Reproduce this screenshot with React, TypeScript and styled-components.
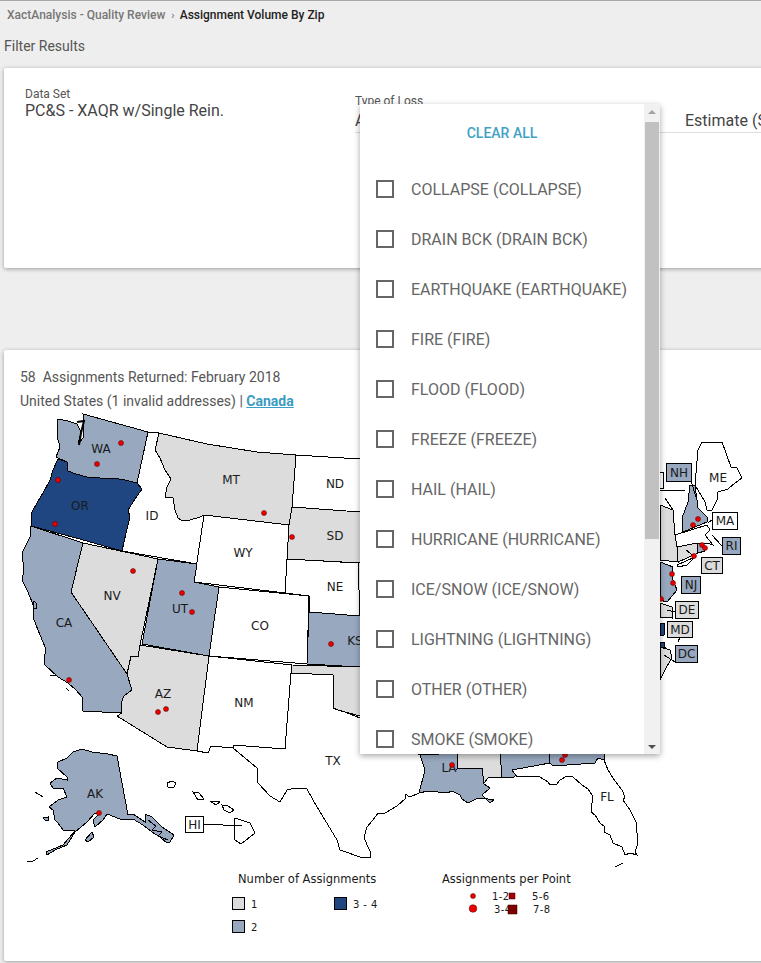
import styled, { createGlobalStyle } from "styled-components";

const GlobalStyle = createGlobalStyle`
  html, body {
    margin: 0;
    padding: 0;
    background: #eeeeee;
    overflow: hidden;
    font-family: Roboto, "Liberation Sans", sans-serif;
  }
`;

const GRAY = "#dcdcdc";
const SLATE = "#97a8bf";
const NAVY = "#1f4680";
const WHITE = "#ffffff";

const Page = styled.div`
  position: relative;
  width: 761px;
  height: 963px;
  overflow: hidden;
  border-top: 1px solid #a8a8a8;
  box-sizing: border-box;
`;

const Breadcrumb = styled.div`
  display: flex;
  align-items: center;
  height: 28px;
  padding-left: 7px;
  font-size: 12px;
  font-weight: 500;
  color: #222;
`;

const Crumb = styled.span`
  color: #777;
`;

const CrumbArrow = styled.span`
  margin: 0 5px 0 6px;
  font-size: 11px;
  color: #777;
`;

const Title = styled.div`
  padding: 8px 0 0 4px;
  height: 31px;
  font-size: 14px;
  line-height: 18px;
  color: #555;
`;

const Card = styled.section<{ $height: number }>`
  width: 830px;
  margin-left: 4px;
  height: ${(p) => p.$height}px;
  background: #fff;
  border-radius: 2px;
  box-shadow: 0 1px 4px rgba(0, 0, 0, 0.35);
`;

const FilterRow = styled.div`
  display: grid;
  grid-template-columns: 330px 330px 140px;
  padding-left: 21px;
`;

const Field = styled.div<{ $top: number }>`
  padding-top: ${(p) => p.$top}px;
  white-space: nowrap;
  overflow: hidden;
`;

const FieldLabel = styled.div`
  font-size: 12px;
  line-height: 14px;
  color: #555;
`;

const FieldValue = styled.div<{ $line?: boolean }>`
  box-sizing: border-box;
  font-size: 16px;
  line-height: 19px;
  color: #444;
  ${(p) =>
    p.$line &&
    `
    height: 25px;
    padding-top: 3px;
    border-bottom: 1px solid #dddddd;
  `}
`;

const MapCard = styled(Card)`
  margin-top: 82px;
`;

const Summary = styled.div`
  padding: 15px 0 0 16px;
  height: 45px;
  font-size: 14px;
  line-height: 24px;
  color: #555;
`;

const CanadaLink = styled.a`
  color: #3a9cc0;
  font-weight: 700;
  text-decoration: underline;
`;

const MapSvg = styled.svg`
  display: block;
  width: 757px;
  height: 551px;
`;

const StateLabel = styled.text`
  font-family: "DejaVu Sans", sans-serif;
  font-size: 12px;
  fill: #1a1a1a;
  text-anchor: middle;
  dominant-baseline: central;
`;

const LegendText = styled.text`
  font-family: "DejaVu Sans", sans-serif;
  font-size: 11.5px;
  fill: #1a1a1a;
`;

const LegendSmall = styled.text`
  font-family: "DejaVu Sans", sans-serif;
  font-size: 10px;
  letter-spacing: 0.4px;
  fill: #1a1a1a;
  dominant-baseline: central;
`;

const Dropdown = styled.div`
  position: absolute;
  left: 360px;
  top: 103px;
  width: 300px;
  height: 650px;
  display: flex;
  background: #fff;
  box-shadow: 0 2px 6px rgba(0, 0, 0, 0.35);
`;

const OptionPane = styled.div`
  flex: 1;
  overflow: hidden;
`;

const ClearAll = styled.div`
  height: 60px;
  padding-top: 21px;
  box-sizing: border-box;
  text-align: center;
  font-size: 14px;
  line-height: 17px;
  font-weight: 500;
  color: #3fa2c4;
`;

const OptionRow = styled.div`
  display: flex;
  align-items: center;
  height: 50px;
  padding-left: 16px;
  font-size: 16px;
  color: #666;
  white-space: nowrap;
`;

const CheckBox = styled.span`
  flex: none;
  box-sizing: border-box;
  width: 18px;
  height: 18px;
  margin-right: 17px;
  border: 2px solid #666;
`;

const ScrollTrack = styled.div`
  flex: none;
  width: 16px;
  display: flex;
  flex-direction: column;
  align-items: center;
  background: #f1f1f1;
  position: relative;
`;

const ScrollArrow = styled.span<{ $down?: boolean }>`
  position: absolute;
  left: 4px;
  ${(p) => (p.$down ? "bottom: 5px;" : "top: 6px;")}
  border-left: 4px solid transparent;
  border-right: 4px solid transparent;
  ${(p) => (p.$down ? "border-top: 4px solid #505050;" : "border-bottom: 4px solid #a3a3a3;")}
`;

const ScrollThumb = styled.div`
  margin-top: 18px;
  width: 14px;
  height: 417px;
  background: #c1c1c1;
`;

const options = [
  "COLLAPSE (COLLAPSE)",
  "DRAIN BCK (DRAIN BCK)",
  "EARTHQUAKE (EARTHQUAKE)",
  "FIRE (FIRE)",
  "FLOOD (FLOOD)",
  "FREEZE (FREEZE)",
  "HAIL (HAIL)",
  "HURRICANE (HURRICANE)",
  "ICE/SNOW (ICE/SNOW)",
  "LIGHTNING (LIGHTNING)",
  "OTHER (OTHER)",
  "SMOKE (SMOKE)",
];

// state shapes traced in page coordinates, the svg viewBox lines up with the page
const regions: [string, string][] = [
  [SLATE, "83,414 148,432 137,483 125,480 113,478 100,478 87,477 76,474 68,471 67,462 58,458 56,457 60,447 57,436 58,419 68,421 77,424 81,432 78,444 83,438 84,425"],
  [NAVY, "58,459 67,462 68,471 76,474 87,477 100,478 113,478 125,480 137,483 142,489 135,499 128,510 130,517 126,533 122,551 76,538 31,526 32,512 37,503 43,493 50,480 53,470"],
  [WHITE, "148,432 159,433 155,450 160,458 165,470 171,479 167,487 165,497 173,498 175,510 178,518 182,521 190,520 200,517 204,515 197,564 122,551 126,533 130,517 128,510 135,499 142,489 137,483"],
  [GRAY, "159,433 207,444 257,452 296,455 292,507 289,525 204,515 200,517 190,520 182,521 178,518 175,510 173,498 165,497 167,487 171,479 165,470 160,458 155,450"],
  [WHITE, "296,455 360,459 360,512 292,507"],
  [GRAY, "292,507 360,512 360,563 287,559 289,525"],
  [WHITE, "204,515 289,525 285,593 194,582"],
  [WHITE, "287,559 358,563 360,616 309,612 309,596 285,593"],
  [GRAY, "83,543 158,559 140,645 138,657 131,656 127,674 71,592"],
  [SLATE, "158,559 197,564 194,582 219,587 209,656 142,644"],
  [WHITE, "219,587 309,596 307,664 209,656"],
  [SLATE, "309,612 360,616 360,667 307,664"],
  [SLATE, "31,526 83,543 71,592 127,674 132,687 132,690 124,696 122,703 121,713 83,711 82,697 76,690 68,683 58,677 44,664 45,654 45,647 38,630 33,617 34,607 30,597 27,590 22,580 24,570 22,553 26,545 30,537"],
  [GRAY, "127,674 131,656 138,657 140,645 209,656 197,751 167,747 117,716 122,713 121,703 124,696 132,690"],
  [WHITE, "209,656 292,665 291,673 285,749 233,745 233,748 211,746 208,753 197,751"],
  [GRAY, "292,665 360,667 360,716 345,712 338,710 333,708 333,675 291,673"],
  [WHITE, "291,673 333,675 333,708 338,710 345,712 360,718 420,755 425,770 419,793 410,797 405,794 405,799 397,806 385,813 378,813 373,820 367,827 364,837 367,845 371,853 370,858 360,857 340,850 337,840 325,820 317,807 307,789 295,788 287,790 280,802 270,796 258,783 257,768 245,758 233,748 233,745 285,749"],
  [SLATE, "420,755 458,753 457,769 482,768 484,784 490,788 482,795 490,803 494,800 488,799 478,798 468,803 462,799 460,795 452,791 447,793 428,791 419,793 425,770"],
  [GRAY, "458,753 500,753 502,777 488,778 484,783 482,768 457,769"],
  [SLATE, "500,753 549,753 550,763 512,770 517,775 512,778 508,777 502,777"],
  [SLATE, "549,753 604,753 604,760 598,758 595,763 553,766 550,763"],
  [WHITE, "512,770 550,763 553,766 595,763 598,758 604,760 608,770 613,778 622,790 625,797 623,800 630,810 636,822 637,833 638,843 635,852 637,855 630,853 625,855 622,847 613,843 610,835 604,832 605,827 600,823 595,815 591,812 592,803 592,795 588,789 582,785 573,777 567,776 560,780 557,784 550,785 548,782 540,777 527,776 517,777"],
  [SLATE, "117,756 128,815 133,814 145,822 145,814 152,817 162,827 174,835 170,842 167,843 160,837 152,832 143,825 133,819 120,819 107,814 103,820 95,827 93,820 100,813 95,813 87,822 75,832 67,845 55,850 47,855 46,852 63,845 75,831 63,830 58,823 55,820 53,810 49,807 58,800 67,797 63,788 53,788 50,783 57,778 67,780 67,777 57,768 58,762 67,758 73,752 82,749 92,752 108,754"],
  [SLATE, "43,818 48,817 48,820 45,820"],
  [SLATE, "85,840 92,832 94,837 88,842"],
  [WHITE, "235,818 250,823 255,833 241,844 235,840 234,828"],
  [WHITE, "167,783 172,781 176,783 174,787 168,787"],
  [WHITE, "193,792 199,793 204,799 198,800"],
  [WHITE, "222,805 228,806 234,810 230,813 224,810"],
  [WHITE, "210,801 220,802 216,805"],
  [WHITE, "698,450 702,442 712,443 722,442 726,453 731,467 737,468 742,478 735,483 728,489 718,492 717,500 712,510 707,510 705,502 695,485"],
  [GRAY, "660,505 673,510 675,535 677,547 678,562 660,560"],
  [SLATE, "690,485 695,485 698,508 708,518 707,522 683,532 682,518 688,502"],
  [WHITE, "675,535 707,525 710,530 705,535 713,545 707,543 677,547"],
  [GRAY, "677,547 697,543 698,553 678,562"],
  [SLATE, "697,543 703,543 705,551 698,553"],
  [SLATE, "660,562 673,567 672,577 677,590 667,602 660,600"],
  [WHITE, "677,565 695,557 687,565 678,567"],
  [GRAY, "660,603 672,607 672,618 660,617"],
  [NAVY, "660,623 665,623 664,635 660,636"],
  [NAVY, "660,642 664,642 665,647 660,647"],
  [GRAY, "660,647 670,650 672,658 666,668 660,680"],
];

const strokes = [
  "M660 490 L685 490",
  "M665 498 L673 510",
  "M691 481 L696 497",
  "M708 523 L716 517",
  "M712 535 L722 546",
  "M686 550 L694 556",
  "M667 610 L675 612",
  "M680 637 L678 642",
  "M664 655 L675 662",
  "M242 826 L203 824",
  "M50 675 L57 676",
  "M66 688 L69 691",
  "M27 862 L33 861 L38 858",
  "M35 792 L43 797",
  "M615 867 L623 863",
  "M34 601 L37 604 L36 609 L33 608 Z",
  "M148 820 L156 826 L152 830 L162 832 L158 836 L168 840",
];

const labels: [string, number, number][] = [
  ["WA", 101, 449],
  ["MT", 231, 480],
  ["ND", 335, 484],
  ["OR", 80, 506],
  ["ID", 152, 516],
  ["SD", 335, 536],
  ["WY", 243, 553],
  ["NE", 335, 587],
  ["NV", 112, 596],
  ["UT", 180, 609],
  ["CO", 260, 626],
  ["CA", 64, 623],
  ["KS", 355, 641],
  ["AZ", 163, 694],
  ["NM", 244, 703],
  ["TX", 333, 761],
  ["AK", 95, 794],
  ["LA", 449, 768],
  ["FL", 607, 797],
  ["ME", 718, 478],
];

const boxes: [string, number, number, number, number, string][] = [
  ["", 650, 472, 13, 16, WHITE],
  ["NH", 666, 463, 25, 18, SLATE],
  ["MA", 712, 512, 25, 17, WHITE],
  ["RI", 722, 537, 18, 17, SLATE],
  ["CT", 701, 557, 21, 16, GRAY],
  ["NJ", 681, 576, 19, 17, SLATE],
  ["DE", 675, 601, 23, 17, GRAY],
  ["MD", 667, 621, 25, 16, GRAY],
  ["DC", 675, 645, 22, 17, SLATE],
  ["HI", 185, 816, 18, 16, WHITE],
];

const dots = [
  [121, 443], [97, 464], [58, 480], [55, 524], [264, 513], [292, 537],
  [133, 571], [182, 593], [192, 612], [331, 644], [69, 680], [158, 712],
  [166, 709], [99, 813], [452, 765], [562, 760], [565, 755], [698, 519],
  [693, 525], [702, 545], [705, 548], [694, 556], [672, 574], [673, 583], [661, 599],
];

function AssignmentMap() {
  return (
    <MapSvg viewBox="4 410 757 551">
      {regions.map(([fill, points], i) => (
        <polygon key={i} points={points} fill={fill} stroke="#000" strokeWidth={1} shapeRendering="crispEdges" />
      ))}
      {strokes.map((d) => (
        <path key={d} d={d} fill="none" stroke="#000" strokeWidth={1} shapeRendering="crispEdges" />
      ))}
      <path d="M77 422 L84 421 L81 433 L79 445" fill="none" stroke="#000" strokeWidth={2} />
      {labels.map(([text, x, y]) => (
        <StateLabel key={text} x={x} y={y}>
          {text}
        </StateLabel>
      ))}
      {boxes.map(([text, x, y, w, h, fill]) => (
        <g key={text || "VT"}>
          <rect x={x + 0.5} y={y + 0.5} width={w} height={h} fill={fill} stroke="#000" />
          <StateLabel x={x + w / 2 + 0.5} y={y + h / 2 + 0.5}>
            {text}
          </StateLabel>
        </g>
      ))}
      {dots.map(([x, y]) => (
        <circle key={`${x}-${y}`} cx={x} cy={y} r={2.5} fill="#ee0000" stroke="#400" strokeWidth={0.5} />
      ))}

      <LegendText x={238} y={883}>Number of Assignments</LegendText>
      <rect x={232.5} y={897.5} width={12} height={12} fill={GRAY} stroke="#000" />
      <LegendSmall x={251} y={904}>1</LegendSmall>
      <rect x={232.5} y={920.5} width={12} height={12} fill={SLATE} stroke="#000" />
      <LegendSmall x={251} y={927}>2</LegendSmall>
      <rect x={334.5} y={897.5} width={12} height={12} fill={NAVY} stroke="#000" />
      <LegendSmall x={353} y={904}>3 - 4</LegendSmall>

      <LegendText x={442} y={883}>Assignments per Point</LegendText>
      <circle cx={473} cy={896} r={2.5} fill="#ee0000" stroke="#400" strokeWidth={0.5} />
      <circle cx={473} cy={908.5} r={3.8} fill="#ee0000" stroke="#400" strokeWidth={0.5} />
      <LegendSmall x={492} y={896}>1-2</LegendSmall>
      <LegendSmall x={494} y={909}>3-4</LegendSmall>
      <rect x={509} y={893} width={6} height={6} fill="#a80000" stroke="#300" strokeWidth={0.5} />
      <rect x={508} y={905} width={9} height={9} fill="#7c0000" stroke="#300" strokeWidth={0.5} />
      <LegendSmall x={532} y={896}>5-6</LegendSmall>
      <LegendSmall x={533} y={909}>7-8</LegendSmall>
    </MapSvg>
  );
}

export default function App() {
  return (
    <>
      <GlobalStyle />
      <Page>
        <Breadcrumb>
          <Crumb>XactAnalysis - Quality Review</Crumb>
          <CrumbArrow>›</CrumbArrow>
          Assignment Volume By Zip
        </Breadcrumb>
        <Title>Filter Results</Title>
        <Card $height={200}>
          <FilterRow>
            <Field $top={19}>
              <FieldLabel>Data Set</FieldLabel>
              <FieldValue>PC&amp;S - XAQR w/Single Rein.</FieldValue>
            </Field>
            <Field $top={26}>
              <FieldLabel>Type of Loss</FieldLabel>
              <FieldValue $line>All</FieldValue>
            </Field>
            <Field $top={40}>
              <FieldValue $line>Estimate (S</FieldValue>
            </Field>
          </FilterRow>
        </Card>
        <MapCard $height={611}>
          <Summary>
            58&nbsp; Assignments Returned: February 2018
            <br />
            United States (1 invalid addresses) | <CanadaLink>Canada</CanadaLink>
          </Summary>
          <AssignmentMap />
        </MapCard>
        <Dropdown>
          <OptionPane>
            <ClearAll>CLEAR ALL</ClearAll>
            {options.map((option) => (
              <OptionRow key={option}>
                <CheckBox />
                {option}
              </OptionRow>
            ))}
          </OptionPane>
          <ScrollTrack>
            <ScrollArrow />
            <ScrollThumb />
            <ScrollArrow $down />
          </ScrollTrack>
        </Dropdown>
      </Page>
    </>
  );
}
